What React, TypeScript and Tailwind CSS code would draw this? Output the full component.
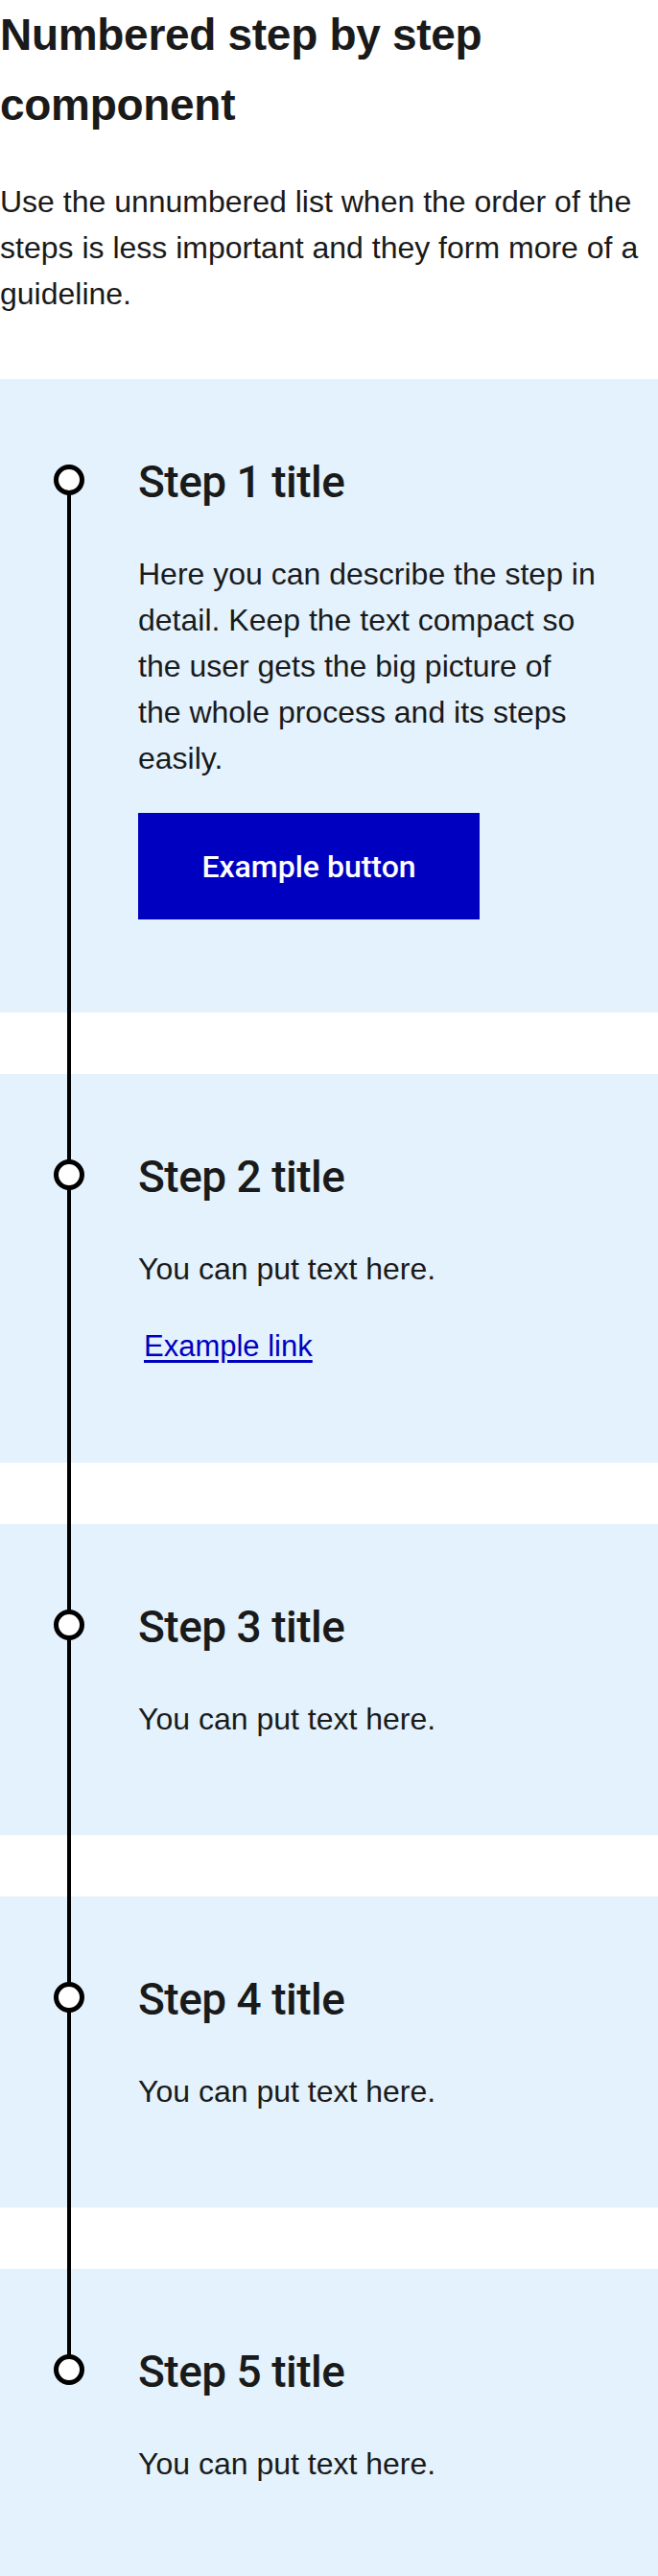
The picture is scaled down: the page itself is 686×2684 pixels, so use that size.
import React from 'react';

type Step = {
  title: string;
  text: string;
  action?: 'button' | 'link';
};

const STEPS: Step[] = [
  {
    title: 'Step 1 title',
    text: 'Here you can describe the step in detail. Keep the text compact so the user gets the big picture of the whole process and its steps easily.',
    action: 'button',
  },
  { title: 'Step 2 title', text: 'You can put text here.', action: 'link' },
  { title: 'Step 3 title', text: 'You can put text here.' },
  { title: 'Step 4 title', text: 'You can put text here.' },
  { title: 'Step 5 title', text: 'You can put text here.' },
];

const StepItem: React.FC<{ step: Step }> = ({ step }) => (
  <li className="relative bg-[#e3f2fd] pt-[79px] pb-[97px] pl-[144px] pr-[57px]">
    {/* step marker */}
    <span className="absolute left-[56px] top-[89px] z-20 box-border h-[32px] w-[32px] rounded-full border-[5px] border-black bg-white" />
    <h2 className="font-['Roboto','Liberation_Sans',sans-serif] text-[46px] font-medium leading-[56px] tracking-[-0.5px]">
      {step.title}
    </h2>
    <p className="mt-[44px] max-w-[480px] text-[32px] leading-[48px]">{step.text}</p>
    {step.action === 'button' && (
      <button className="mt-[33px] flex h-[111px] w-[356px] items-center justify-center bg-[#0000c0] font-['Roboto','Liberation_Sans',sans-serif] text-[32px] font-medium text-white">
        Example button
      </button>
    )}
    {step.action === 'link' && (
      <div className="mt-[33px] pl-[6px] text-[31px] leading-[48px]">
        <a href="#" className="text-[#0000c0] underline underline-offset-[4px]">
          Example link
        </a>
      </div>
    )}
  </li>
);

export default function App() {
  return (
    <div className="min-h-screen bg-white font-['Liberation_Sans',Arial,sans-serif] text-[#1a1a1a]">
      <h1 className="text-[46px] font-bold leading-[73px] tracking-[-0.3px]">Numbered step by step component</h1>
      <p className="mt-[40px] text-[32px] leading-[48px]">
        Use the unnumbered list when the order of the steps is less important and they form more of a guideline.
      </p>
      <ol className="relative mt-[65px] flex flex-col gap-[64px]">
        {/* connecting line, first marker to last marker */}
        <span className="absolute left-[70px] top-[105px] bottom-[219px] z-10 w-[4px] bg-black" />
        {STEPS.map((s) => (
          <StepItem key={s.title} step={s} />
        ))}
      </ol>
    </div>
  );
}
